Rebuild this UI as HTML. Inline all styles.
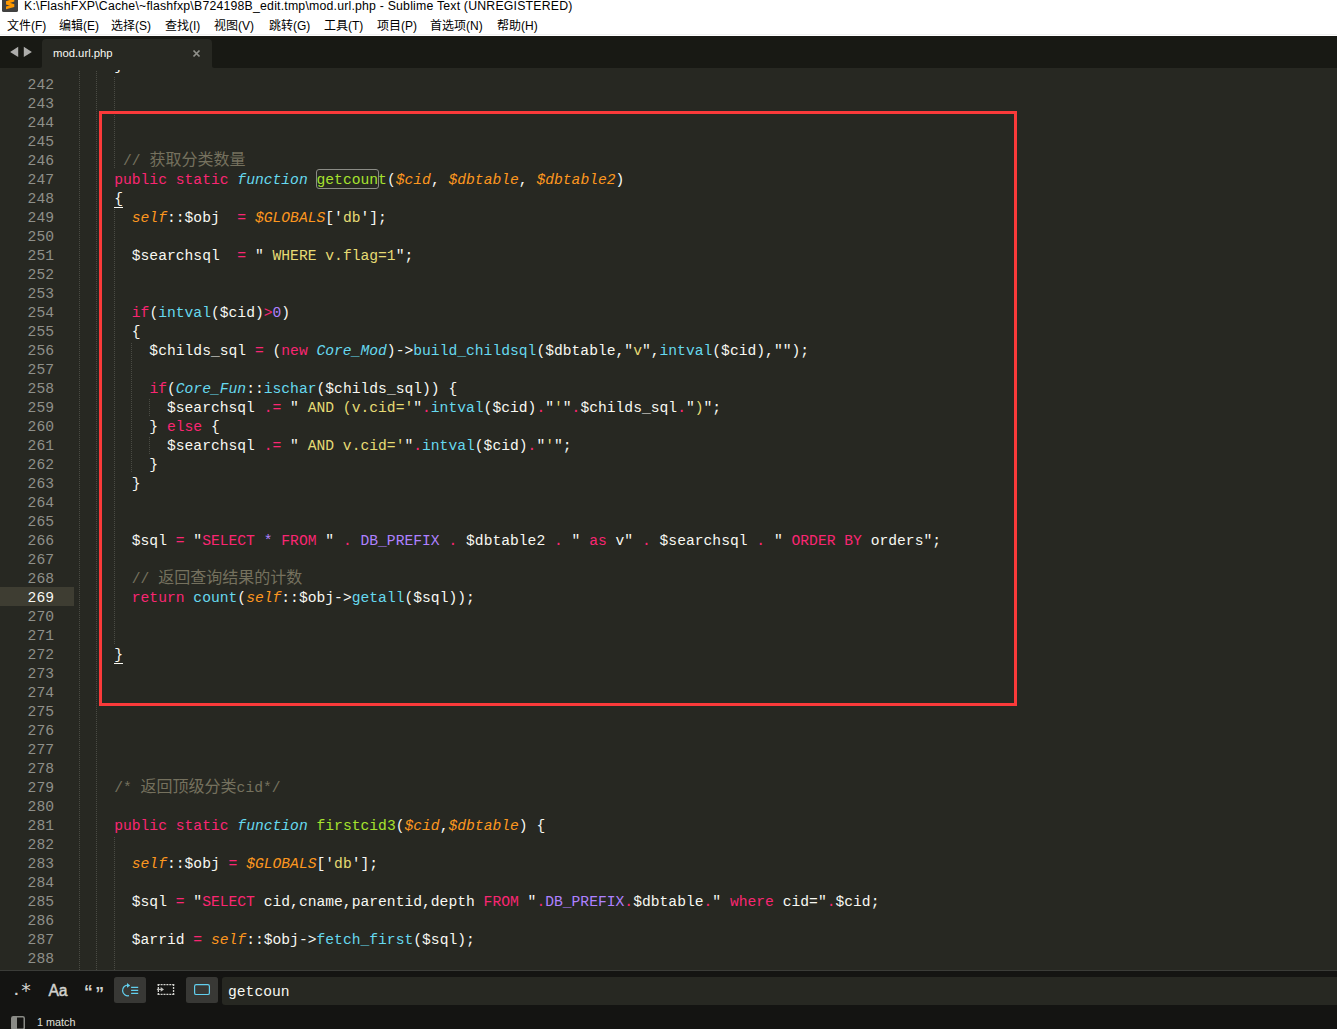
<!DOCTYPE html>
<html lang="zh">
<head>
<meta charset="utf-8">
<title>mod.url.php - Sublime Text</title>
<style>
html,body{margin:0;padding:0}
body{width:1337px;height:1029px;overflow:hidden;position:relative;background:#272822;font-family:"Liberation Sans", "Noto Sans CJK SC", sans-serif}
#title{position:absolute;left:0;top:0;width:1337px;height:15px;background:#fff;overflow:hidden}
#title .ico{position:absolute;left:2px;top:-4px;width:16px;height:16px}
#title .tx{position:absolute;left:24px;top:-2px;font-size:12.3px;line-height:16px;color:#000;white-space:pre;letter-spacing:0.2px}
#menu{position:absolute;left:0;top:15px;width:1337px;height:21px;background:linear-gradient(#fff 19px,#f1f1f1 19px,#f1f1f1 20px,#fff 20px);font-size:12px;color:#000}
#menu span{position:absolute;top:2px;line-height:19px;white-space:pre}
#tabs{position:absolute;left:0;top:36px;width:1337px;height:32px;background:#272822}
#tabs .bar{position:absolute;left:0;top:0}
#tabs .nm{position:absolute;left:53px;top:9px;font-size:11.3px;line-height:16px;color:#f8f8f2}
#ed{position:absolute;left:0;top:68px;width:1337px;height:902px;overflow:hidden;background:#272822;
 font-family:"Liberation Mono", "Noto Sans CJK SC", monospace;font-size:14.667px;line-height:19px;color:#f8f8f2}
.ln{position:absolute;left:0;height:19px;width:1337px;white-space:pre}
.ln .no{position:absolute;left:0;top:2px;width:54px;text-align:right;color:#8f908a}
.ln.cur .no{color:#f8f8f2}
.ln.cur::before{content:"";position:absolute;left:0;top:0;width:74px;height:19px;background:#3e3d32}
.ln .cd{position:absolute;left:79px;top:2px}
.z{font-weight:normal;font-size:16px;line-height:1px}
.k{color:#f92672}.f{color:#66d9ef}.fi{color:#66d9ef;font-style:italic}.g{color:#a6e22e}
.o{color:#fd971f;font-style:italic}.s{color:#e6db74}.p{color:#ae81ff}.c{color:#75715e}
.u{border-bottom:1px solid #f8f8f2;display:inline-block;height:17px;line-height:19px;vertical-align:top}
.m{position:relative}
.m::after{content:"";position:absolute;left:-1px;top:-3px;right:-1px;bottom:-1px;border:1px solid #8b8c86;border-radius:3px}
.gd{position:absolute;width:1px;background-image:linear-gradient(#4a4b44 50%,transparent 50%);background-size:1px 2px}
#box{position:absolute;left:99px;top:43px;width:912px;height:589px;border:3px solid #fb3a3a}
#clip{position:absolute;left:0;top:0;width:1337px;height:2px;background:#272822}
#find{position:absolute;left:0;top:970px;width:1337px;height:59px;background:#141412;border-top:1px solid #3b3c38;box-sizing:border-box}
#find .btn{position:absolute;top:6px;width:32px;height:26px;border-radius:2.5px}
#find .btn.on{background:#383835}
#find .inp{position:absolute;left:222px;top:6px;width:1115px;height:28px;background:#272822;border-radius:3px 0 0 3px;
 font-family:"Liberation Mono", "Noto Sans CJK SC", monospace;font-size:14.667px;line-height:27px;color:#f8f8f2}
#find .inp span{position:absolute;left:6px;top:2px}
#find .st{position:absolute;left:37px;top:44px;font-size:10.8px;line-height:14px;color:#e0e0dc}
#find .side{position:absolute;left:11px;top:45px}
</style>
</head>
<body>
<div id="title">
<svg class="ico" width="16" height="16" viewBox="0 0 16 16"><rect x="0" y="0" width="16" height="16" rx="1.6" fill="#414141"/><path d="M4 5.2L12.3 2.6V5.6L4 8.2Z M4 5.6L12.3 8.3V11.1L4 8.4Z M4 10.6L12.3 8.3V10.9L4 13.3Z" fill="#ff9800"/></svg>
<span class="tx">K:\FlashFXP\Cache\~flashfxp\B724198B_edit.tmp\mod.url.php - Sublime Text (UNREGISTERED)</span>
</div>
<div id="menu"><span style="left:7px">文件(F)</span><span style="left:59px">编辑(E)</span><span style="left:111px">选择(S)</span><span style="left:165px">查找(I)</span><span style="left:214px">视图(V)</span><span style="left:269px">跳转(G)</span><span style="left:324px">工具(T)</span><span style="left:377px">项目(P)</span><span style="left:430px">首选项(N)</span><span style="left:497px">帮助(H)</span></div>
<div id="tabs">
<svg class="bar" width="1337" height="32" viewBox="0 0 1337 32"><rect x="0" y="0" width="1337" height="32" fill="#181914"/><path d="M39.5 32Q42 32 42 29.5V7Q42 3 46 3H208Q212 3 212 7V29.5Q212 32 214.5 32Z" fill="#272822"/><path d="M18.2 10.8v10.3L10.1 16z M23.8 10.8v10.3L31.9 16z" fill="#adadab"/><path d="M193.5 14.5l6 6M199.5 14.5l-6 6" stroke="#90918b" stroke-width="1.7" fill="none"/></svg>
<span class="nm">mod.url.php</span>
</div>
<div id="ed">
<i class="gd" style="left:79px;top:3px;height:899px"></i>
<i class="gd" style="left:96px;top:3px;height:899px"></i>
<i class="gd" style="left:114px;top:9px;height:92px"></i>
<i class="gd" style="left:114px;top:141px;height:435px"></i>
<i class="gd" style="left:131px;top:275px;height:130px"></i>
<i class="gd" style="left:149px;top:331px;height:17px"></i>
<i class="gd" style="left:149px;top:369px;height:17px"></i>
<i class="gd" style="left:114px;top:769px;height:133px"></i>
<div class="ln" style="top:-13px"><span class="no"></span><span class="cd">    }</span></div>
<div class="ln" style="top:6px"><span class="no">242</span><span class="cd"></span></div>
<div class="ln" style="top:25px"><span class="no">243</span><span class="cd"></span></div>
<div class="ln" style="top:44px"><span class="no">244</span><span class="cd"></span></div>
<div class="ln" style="top:63px"><span class="no">245</span><span class="cd"></span></div>
<div class="ln" style="top:82px"><span class="no">246</span><span class="cd">     <span class="c">// <b class="z">获取分类数量</b></span></span></div>
<div class="ln" style="top:101px"><span class="no">247</span><span class="cd">    <span class="k">public</span> <span class="k">static</span> <span class="fi">function</span> <span class="g m">getcoun</span><span class="g">t</span>(<span class="o">$cid</span>, <span class="o">$dbtable</span>, <span class="o">$dbtable2</span>)</span></div>
<div class="ln" style="top:120px"><span class="no">248</span><span class="cd">    <span class="u">{</span></span></div>
<div class="ln" style="top:139px"><span class="no">249</span><span class="cd">      <span class="o">self</span>::$obj  <span class="k">=</span> <span class="o">$GLOBALS</span>['<span class="s">db</span>'];</span></div>
<div class="ln" style="top:158px"><span class="no">250</span><span class="cd"></span></div>
<div class="ln" style="top:177px"><span class="no">251</span><span class="cd">      $searchsql  <span class="k">=</span> "<span class="s"> WHERE v.flag=1</span>";</span></div>
<div class="ln" style="top:196px"><span class="no">252</span><span class="cd"></span></div>
<div class="ln" style="top:215px"><span class="no">253</span><span class="cd"></span></div>
<div class="ln" style="top:234px"><span class="no">254</span><span class="cd">      <span class="k">if</span>(<span class="f">intval</span>($cid)<span class="k">&gt;</span><span class="p">0</span>)</span></div>
<div class="ln" style="top:253px"><span class="no">255</span><span class="cd">      {</span></div>
<div class="ln" style="top:272px"><span class="no">256</span><span class="cd">        $childs_sql <span class="k">=</span> (<span class="k">new</span> <span class="fi">Core_Mod</span>)-&gt;<span class="f">build_childsql</span>($dbtable,"<span class="s">v</span>",<span class="f">intval</span>($cid),"");</span></div>
<div class="ln" style="top:291px"><span class="no">257</span><span class="cd"></span></div>
<div class="ln" style="top:310px"><span class="no">258</span><span class="cd">        <span class="k">if</span>(<span class="fi">Core_Fun</span>::<span class="f">ischar</span>($childs_sql)) {</span></div>
<div class="ln" style="top:329px"><span class="no">259</span><span class="cd">          $searchsql <span class="k">.=</span> "<span class="s"> AND (v.cid='</span>"<span class="k">.</span><span class="f">intval</span>($cid)<span class="k">.</span>"<span class="s">'</span>"<span class="k">.</span>$childs_sql<span class="k">.</span>"<span class="s">)</span>";</span></div>
<div class="ln" style="top:348px"><span class="no">260</span><span class="cd">        } <span class="k">else</span> {</span></div>
<div class="ln" style="top:367px"><span class="no">261</span><span class="cd">          $searchsql <span class="k">.=</span> "<span class="s"> AND v.cid='</span>"<span class="k">.</span><span class="f">intval</span>($cid)<span class="k">.</span>"<span class="s">'</span>";</span></div>
<div class="ln" style="top:386px"><span class="no">262</span><span class="cd">        }</span></div>
<div class="ln" style="top:405px"><span class="no">263</span><span class="cd">      }</span></div>
<div class="ln" style="top:424px"><span class="no">264</span><span class="cd"></span></div>
<div class="ln" style="top:443px"><span class="no">265</span><span class="cd"></span></div>
<div class="ln" style="top:462px"><span class="no">266</span><span class="cd">      $sql <span class="k">=</span> "<span class="k">SELECT</span> <span class="p">*</span> <span class="k">FROM</span> " <span class="k">.</span> <span class="p">DB_PREFIX</span> <span class="k">.</span> $dbtable2 <span class="k">.</span> " <span class="k">as</span> v" <span class="k">.</span> $searchsql <span class="k">.</span> " <span class="k">ORDER BY</span> orders";</span></div>
<div class="ln" style="top:481px"><span class="no">267</span><span class="cd"></span></div>
<div class="ln" style="top:500px"><span class="no">268</span><span class="cd">      <span class="c">// <b class="z">返回查询结果的计数</b></span></span></div>
<div class="ln cur" style="top:519px"><span class="no">269</span><span class="cd">      <span class="k">return</span> <span class="f">count</span>(<span class="o">self</span>::$obj-&gt;<span class="f">getall</span>($sql));</span></div>
<div class="ln" style="top:538px"><span class="no">270</span><span class="cd"></span></div>
<div class="ln" style="top:557px"><span class="no">271</span><span class="cd"></span></div>
<div class="ln" style="top:576px"><span class="no">272</span><span class="cd">    <span class="u">}</span></span></div>
<div class="ln" style="top:595px"><span class="no">273</span><span class="cd"></span></div>
<div class="ln" style="top:614px"><span class="no">274</span><span class="cd"></span></div>
<div class="ln" style="top:633px"><span class="no">275</span><span class="cd"></span></div>
<div class="ln" style="top:652px"><span class="no">276</span><span class="cd"></span></div>
<div class="ln" style="top:671px"><span class="no">277</span><span class="cd"></span></div>
<div class="ln" style="top:690px"><span class="no">278</span><span class="cd"></span></div>
<div class="ln" style="top:709px"><span class="no">279</span><span class="cd">    <span class="c">/* <b class="z">返回顶级分类</b>cid*/</span></span></div>
<div class="ln" style="top:728px"><span class="no">280</span><span class="cd"></span></div>
<div class="ln" style="top:747px"><span class="no">281</span><span class="cd">    <span class="k">public</span> <span class="k">static</span> <span class="fi">function</span> <span class="g">firstcid3</span>(<span class="o">$cid</span>,<span class="o">$dbtable</span>) {</span></div>
<div class="ln" style="top:766px"><span class="no">282</span><span class="cd"></span></div>
<div class="ln" style="top:785px"><span class="no">283</span><span class="cd">      <span class="o">self</span>::$obj <span class="k">=</span> <span class="o">$GLOBALS</span>['<span class="s">db</span>'];</span></div>
<div class="ln" style="top:804px"><span class="no">284</span><span class="cd"></span></div>
<div class="ln" style="top:823px"><span class="no">285</span><span class="cd">      $sql <span class="k">=</span> "<span class="k">SELECT</span> cid,cname,parentid,depth <span class="k">FROM</span> "<span class="k">.</span><span class="p">DB_PREFIX</span><span class="k">.</span>$dbtable<span class="k">.</span>" <span class="k">where</span> cid="<span class="k">.</span>$cid;</span></div>
<div class="ln" style="top:842px"><span class="no">286</span><span class="cd"></span></div>
<div class="ln" style="top:861px"><span class="no">287</span><span class="cd">      $arrid <span class="k">=</span> <span class="o">self</span>::$obj-&gt;<span class="f">fetch_first</span>($sql);</span></div>
<div class="ln" style="top:880px"><span class="no">288</span><span class="cd"></span></div>
<div class="ln" style="top:899px"><span class="no">289</span><span class="cd"></span></div>
<div id="clip"></div>
<div id="box"></div>
</div>
<div id="find">
<div class="btn" style="left:6px"><svg width="32" height="26" viewBox="0 0 32 26"><text x="8.3" y="18.3" font-family="Liberation Sans, sans-serif" font-size="15" font-weight="bold" fill="#d2d2ce">.</text><text x="15.2" y="20.3" font-family="DejaVu Sans, Liberation Sans, sans-serif" font-size="19" fill="#d2d2ce">*</text></svg></div>
<div class="btn" style="left:42px"><svg width="32" height="26" viewBox="0 0 32 26"><text x="6.4" y="19.2" font-family="Liberation Sans, sans-serif" font-size="17.4" fill="#d2d2ce" stroke="#d2d2ce" stroke-width="0.5" textLength="19.2" lengthAdjust="spacingAndGlyphs">Aa</text></svg></div>
<div class="btn" style="left:78px"><svg width="32" height="26" viewBox="0 0 32 26"><text x="6" y="21.3" font-family="Liberation Sans, sans-serif" font-size="17.5" font-weight="bold" fill="#d2d2ce">“</text><text x="17.2" y="22.9" font-family="Liberation Sans, sans-serif" font-size="17.5" font-weight="bold" fill="#d2d2ce">”</text></svg></div>
<div class="btn on" style="left:114px"><svg width="32" height="26" viewBox="0 0 32 26"><path d="M14 8A5.4 5.4 0 1 0 15 18.7" fill="none" stroke="#62cfee" stroke-width="1.2"/><path d="M13 6.1L16.2 8.4L13 10.7Z" fill="#62cfee"/><path d="M17.1 10.4h7.1M17.1 13.4h7.1M17.1 16.4h7.1" fill="none" stroke="#62cfee" stroke-width="1.1"/></svg></div>
<div class="btn" style="left:150px"><svg width="32" height="26" viewBox="0 0 32 26"><path d="M7.7 7.65H24.2M7.7 17.35H24.2" fill="none" stroke="#d2d2ce" stroke-width="1.3" stroke-dasharray="2 0.9"/><path d="M8.35 7V18M23.55 7V18" fill="none" stroke="#d2d2ce" stroke-width="1.3" stroke-dasharray="2 1"/><path d="M6.9 12.4h5" fill="none" stroke="#c6c6c2" stroke-width="1.1"/><path d="M10.7 10L14 12.4L10.7 14.8Z" fill="#c6c6c2"/></svg></div>
<div class="btn on" style="left:186px"><svg width="32" height="26" viewBox="0 0 32 26"><rect x="8.6" y="7.7" width="14.8" height="9.8" rx="1.6" fill="none" stroke="#62cfee" stroke-width="1.2"/></svg></div>
<div class="inp"><span>getcoun</span></div>
<svg class="side" width="14" height="14" viewBox="0 0 14 14"><rect x="0.75" y="0.75" width="12.5" height="12.5" rx="1.5" fill="none" stroke="#8a8b86" stroke-width="1.5"/><rect x="1" y="1" width="5" height="12" fill="#8a8b86"/></svg>
<span class="st">1 match</span>
</div>
</body>
</html>
